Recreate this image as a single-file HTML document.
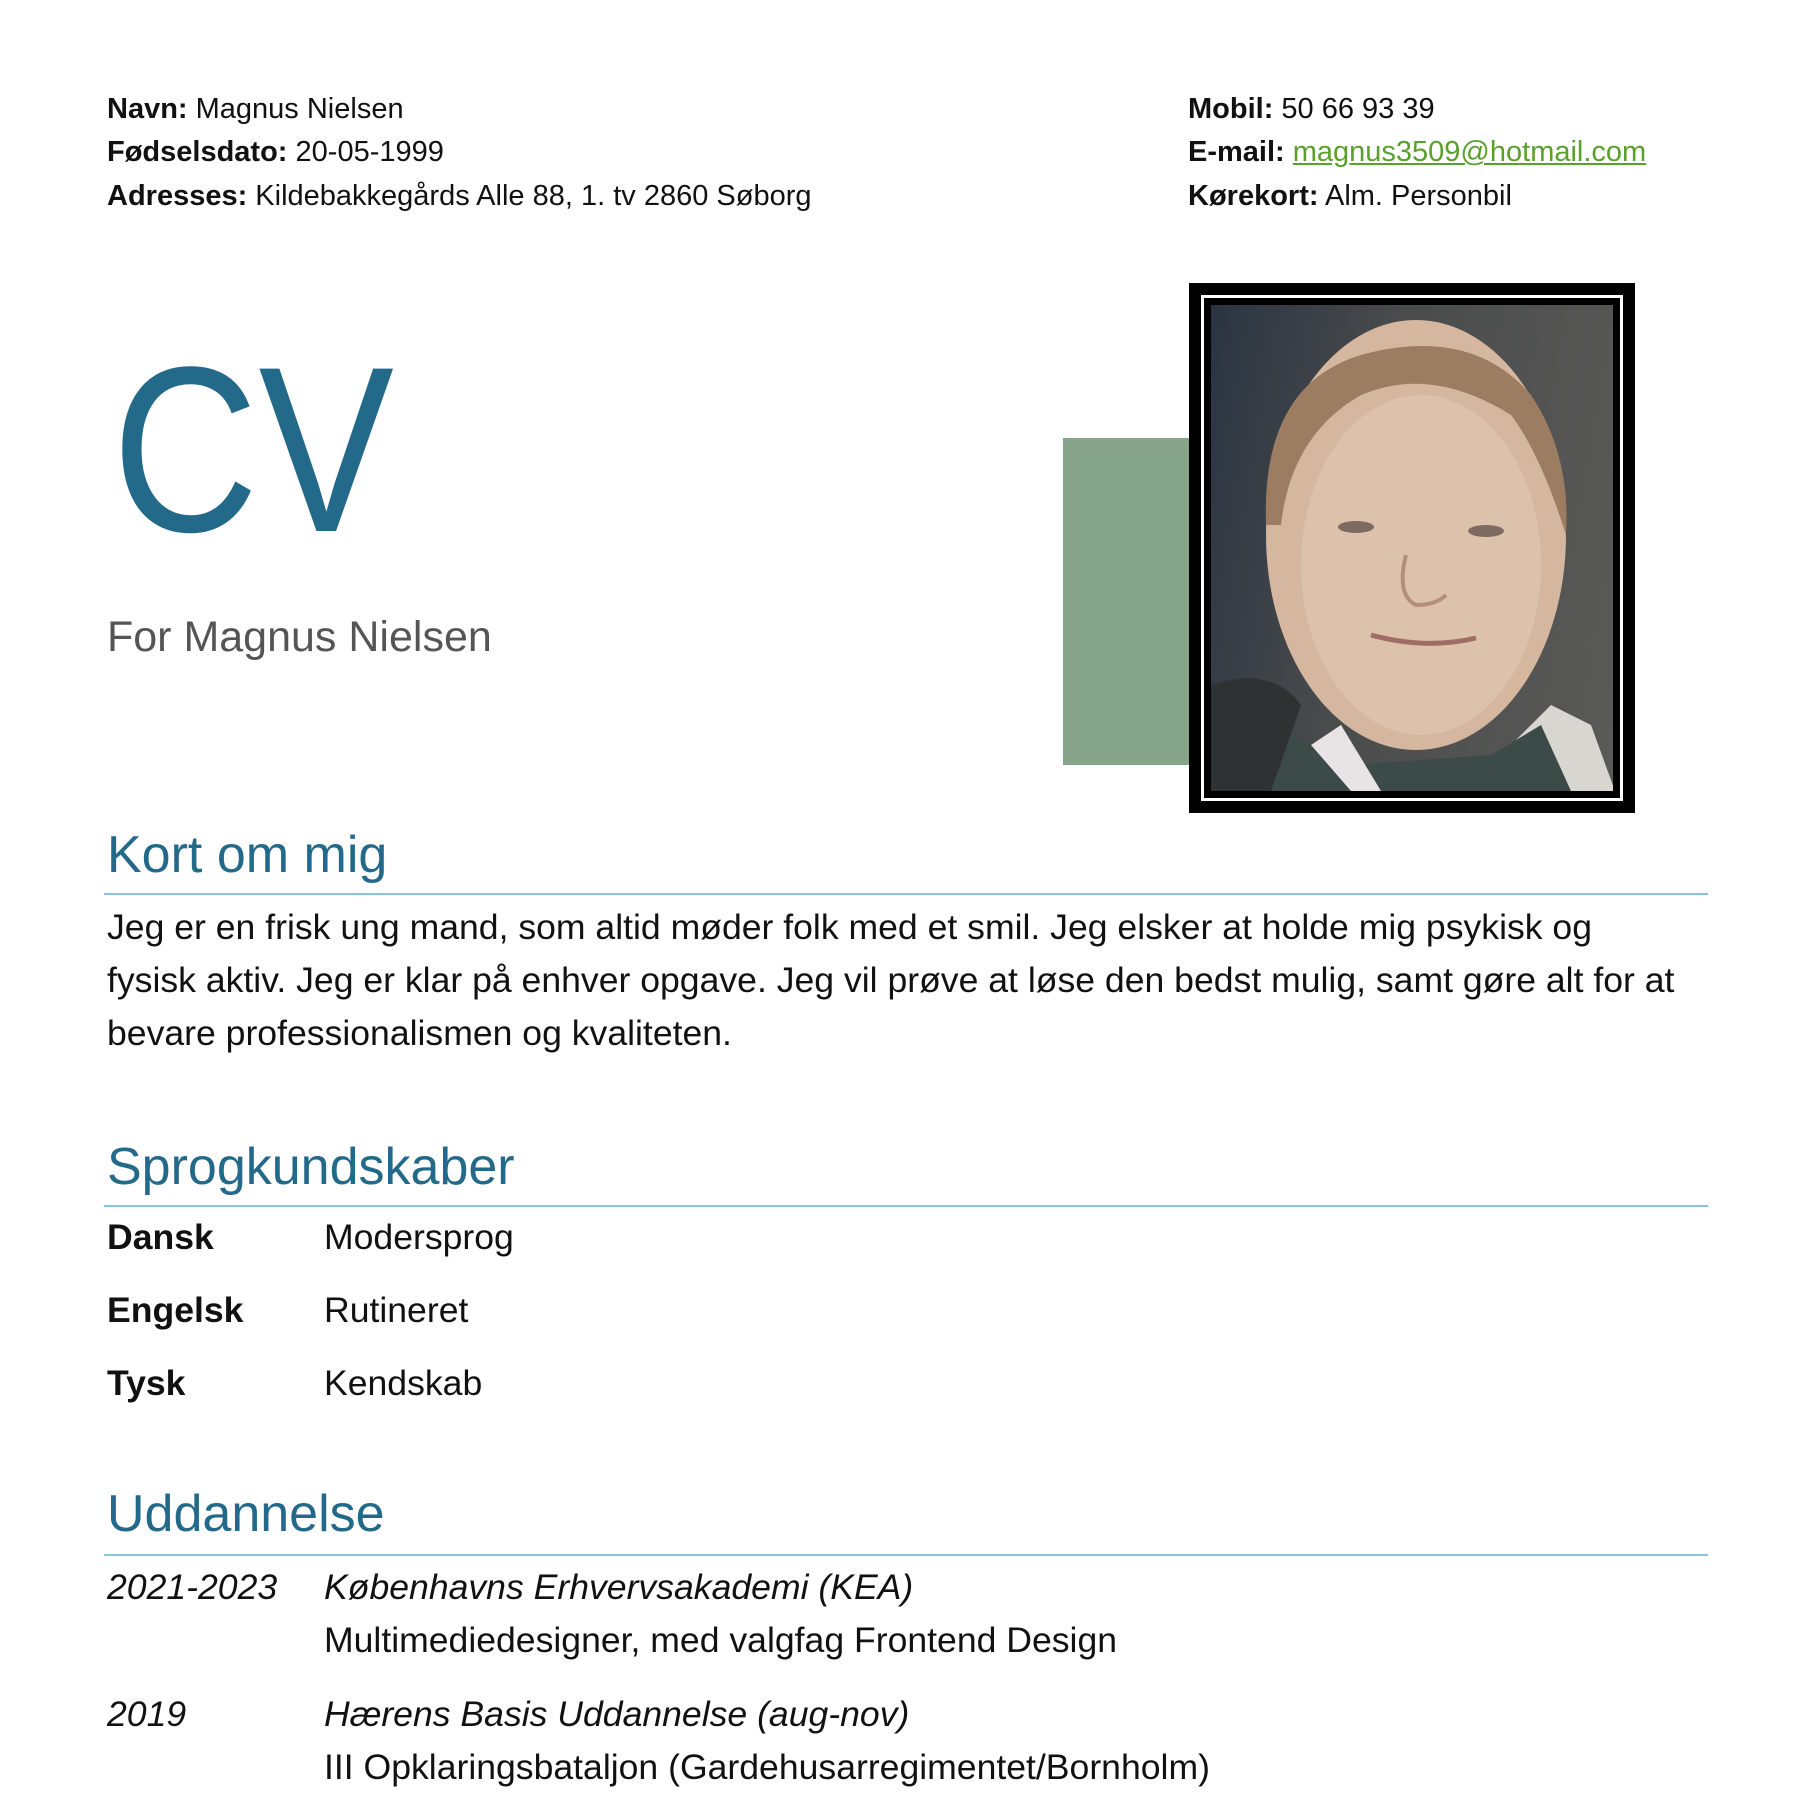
<!DOCTYPE html>
<html><head><meta charset="utf-8"><style>
body{margin:0;width:1800px;height:1800px;background:#fff;position:relative;overflow:hidden;font-family:"Liberation Sans",sans-serif;color:#111}
.a{position:absolute;white-space:nowrap}
.h{font-size:29px;line-height:30px}
.h b{font-weight:bold}
.hd{font-size:52px;color:#23698a;line-height:60px;left:107px}
.rule{position:absolute;left:104px;width:1604px;height:2px;background:#8cc3da}
.p{font-size:35.6px;line-height:40px;left:107px}
.c2{left:324px}
</style></head><body>
<div class="a h" style="left:107px;top:94px"><b>Navn:</b> Magnus Nielsen</div>
<div class="a h" style="left:107px;top:137px"><b>Fødselsdato:</b> 20-05-1999</div>
<div class="a h" style="left:107px;top:181px"><b>Adresses:</b> Kildebakkegårds Alle 88, 1. tv 2860 Søborg</div>
<div class="a h" style="left:1188px;top:94px"><b>Mobil:</b> 50 66 93 39</div>
<div class="a h" style="left:1188px;top:137px"><b>E-mail:</b> <span style="color:#5aa02c;text-decoration:underline">magnus3509@hotmail.com</span></div>
<div class="a h" style="left:1188px;top:181px"><b>Kørekort:</b> Alm. Personbil</div>

<div class="a" style="left:112px;top:300px;font-size:236px;line-height:300px;color:#23698a;transform:scaleX(0.86);transform-origin:left">CV</div>
<div class="a" style="left:107px;top:612px;font-size:43px;line-height:50px;color:#555">For Magnus Nielsen</div>

<div class="a" style="left:1063px;top:438px;width:130px;height:327px;background:#86a58a"></div>
<div class="a" style="left:1189px;top:283px;width:446px;height:530px;background:#000">
 <div style="position:absolute;left:12px;top:12px;right:12px;bottom:12px;border:3px solid #fff"></div>
 <div style="position:absolute;left:22px;top:22px;right:22px;bottom:22px;overflow:hidden;background:linear-gradient(100deg,#2a3442 0%,#4a4c4c 40%,#5a5a58 100%)">
  <svg width="404" height="486" viewBox="0 0 404 486" style="position:absolute;left:0;top:0">
   <path d="M0 380 Q60 360 90 400 L60 486 L0 486Z" fill="#2e3232"/>
   <path d="M300 440 L340 400 L380 420 L404 486 L300 486Z" fill="#d8d6d0"/>
   <path d="M60 486 L80 430 L140 460 L280 450 L330 420 L360 486Z" fill="#3c4a48"/>
   <path d="M100 440 L140 486 L170 486 L130 420Z" fill="#e8e4e6"/>
   <ellipse cx="205" cy="230" rx="150" ry="215" fill="#d5b7a0"/>
   <path d="M55 220 Q50 80 150 50 Q260 20 320 90 Q360 150 355 230 Q330 150 300 110 Q220 60 150 90 Q80 130 70 220Z" fill="#9c7d62"/>
   <ellipse cx="210" cy="260" rx="120" ry="170" fill="#dcc1ab"/>
   <ellipse cx="145" cy="222" rx="18" ry="6" fill="#7d6a60"/>
   <ellipse cx="275" cy="226" rx="18" ry="6" fill="#7d6a60"/>
   <path d="M160 330 Q215 345 265 333" stroke="#a06c66" stroke-width="5" fill="none"/>
   <path d="M195 250 Q185 290 205 300 Q225 300 235 290" stroke="#b48e7c" stroke-width="4" fill="none"/>
  </svg>
 </div>
</div>

<div class="a hd" style="top:825px">Kort om mig</div>
<div class="rule" style="top:893px"></div>
<div class="a p" style="top:907px">Jeg er en frisk ung mand, som altid møder folk med et smil. Jeg elsker at holde mig psykisk og</div>
<div class="a p" style="top:960px">fysisk aktiv. Jeg er klar på enhver opgave. Jeg vil prøve at løse den bedst mulig, samt gøre alt for at</div>
<div class="a p" style="top:1013px">bevare professionalismen og kvaliteten.</div>

<div class="a hd" style="top:1137px">Sprogkundskaber</div>
<div class="rule" style="top:1205px"></div>
<div class="a p" style="top:1217px"><b>Dansk</b></div><div class="a p c2" style="top:1217px">Modersprog</div>
<div class="a p" style="top:1290px"><b>Engelsk</b></div><div class="a p c2" style="top:1290px">Rutineret</div>
<div class="a p" style="top:1363px"><b>Tysk</b></div><div class="a p c2" style="top:1363px">Kendskab</div>

<div class="a hd" style="top:1484px">Uddannelse</div>
<div class="rule" style="top:1554px"></div>
<div class="a p" style="top:1567px"><i>2021-2023</i></div><div class="a p c2" style="top:1567px"><i>Københavns Erhvervsakademi (KEA)</i></div>
<div class="a p c2" style="top:1620px">Multimediedesigner, med valgfag Frontend Design</div>
<div class="a p" style="top:1694px"><i>2019</i></div><div class="a p c2" style="top:1694px"><i>Hærens Basis Uddannelse (aug-nov)</i></div>
<div class="a p c2" style="top:1747px">III Opklaringsbataljon (Gardehusarregimentet/Bornholm)</div>
</body></html>
